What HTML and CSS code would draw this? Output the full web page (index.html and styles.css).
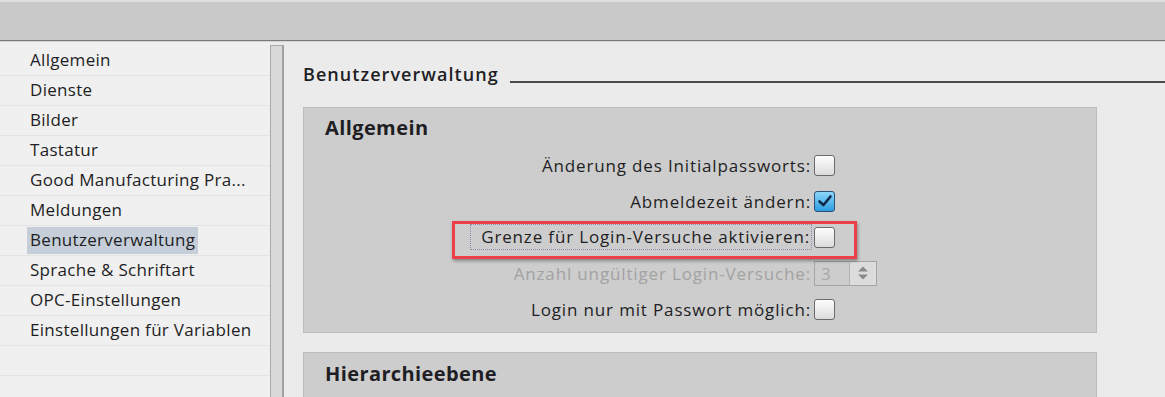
FILE: index.html
```html
<!DOCTYPE html>
<html>
<head>
    <link rel="stylesheet" href="styles.css">
</head>
<body>
    <div class="topbar"></div>

    <div class="main">
        <div class="nav">
            <ul class="nav-list">
                <li><span>Allgemein</span></li>
                <li><span>Dienste</span></li>
                <li><span>Bilder</span></li>
                <li><span>Tastatur</span></li>
                <li><span>Good Manufacturing Pra...</span></li>
                <li><span>Meldungen</span></li>
                <li class="selected"><span>Benutzerverwaltung</span></li>
                <li><span>Sprache &amp; Schriftart</span></li>
                <li><span>OPC-Einstellungen</span></li>
                <li><span>Einstellungen für Variablen</span></li>
                <li><span></span></li>
            </ul>
        </div>
        <div class="scrollbar"><div class="thumb"></div></div>

        <div class="content">
            <div class="section-title">
                <span>Benutzerverwaltung</span>
                <div class="title-line"></div>
            </div>

            <div class="group">
                <div class="group-title">Allgemein</div>
                <div class="row">
                    <div class="label">Änderung des Initialpassworts:</div>
                    <div class="check"></div>
                </div>
                <div class="row">
                    <div class="label">Abmeldezeit ändern:</div>
                    <div class="check checked">
                        <svg width="16" height="14" viewBox="0 0 16 14"><path d="M2.5 7.5 L6.5 11 L13.5 2.5" fill="none" stroke="#10284a" stroke-width="2.6" stroke-linejoin="round" stroke-linecap="round"/></svg>
                    </div>
                </div>
                <div class="row">
                    <div class="label"><span class="focus">Grenze für Login-Versuche aktivieren:</span></div>
                    <div class="check"></div>
                </div>
                <div class="row">
                    <div class="label disabled">Anzahl ungültiger Login-Versuche:</div>
                    <div class="spin">
                        <div class="spin-value">3</div>
                        <div class="spin-btn">
                            <svg width="14" height="16" viewBox="0 0 14 16"><path d="M2 6.5 L7 1.5 L12 6.5 Z M2 9.5 L12 9.5 L7 14.5 Z" fill="#8a8a8a"/></svg>
                        </div>
                    </div>
                </div>
                <div class="row">
                    <div class="label">Login nur mit Passwort möglich:</div>
                    <div class="check"></div>
                </div>
                <div class="marker"></div>
            </div>

            <div class="group group-second">
                <div class="group-title">Hierarchieebene</div>
            </div>
        </div>
    </div>
</body>
</html>
```
FILE: styles.css
```css
body {
    margin: 0;
    font-family: "Open Sans", "DejaVu Sans", sans-serif;
    font-size: 17px;
    letter-spacing: 0.85px;
    color: #1e1e24;
    background: #ebebeb;
    overflow: hidden;
    height: 100vh;
}

.topbar {
    height: 38px;
    background: #c9c9c9;
    border-top: 2px solid #dedede;
    border-bottom: 1px solid #7a7a7a;
}

.main {
    display: flex;
    height: calc(100vh - 42px);
    overflow: hidden;
    border-top: 1px solid #d4d4d4;
}

/* left navigation */
.nav {
    width: 270px;
    background: #f0f0f0;
    padding-top: 4px;
    letter-spacing: 0.3px;
}

.nav-list {
    margin: 0;
    padding: 0;
    list-style: none;
}

.nav-list li {
    height: 29px;
    border-bottom: 1px solid #e4e4e4;
    display: flex;
    align-items: center;
    padding-left: 27px;
}

.nav-list li span {
    padding: 1px 3px 3px 3px;
    line-height: 23px;
}

.nav-list li.selected span {
    background: #c6cfd9;
}

.scrollbar {
    width: 11px;
    background: #dadada;
    border-left: 1px solid #a9a9a9;
    border-right: 2px solid #a0a0a0;
    margin-top: 3px;
}

.scrollbar .thumb {
    height: 100%;
    border-top: 1px solid #a9a9a9;
}

/* right content */
.content {
    flex: 1;
    padding: 18px 68px 0 19px;
}

.section-title {
    display: flex;
    align-items: flex-end;
    font-size: 18px;
    font-weight: 600;
    letter-spacing: 1.05px;
    height: 26px;
    margin-right: -68px;
}

.title-line {
    flex: 1;
    border-bottom: 2px solid #4a4a4a;
    margin-left: 11px;
    margin-bottom: 3px;
}

.group {
    margin-top: 21px;
    background: #cdcdcd;
    border: 1px solid #bcbcbc;
    padding: 6px 0 5px 0;
    position: relative;
}

.group-title {
    font-size: 20px;
    font-weight: 700;
    letter-spacing: 0.4px;
    padding-left: 21px;
    line-height: 28px;
    margin-bottom: 5px;
}

.row {
    display: flex;
    align-items: center;
    height: 36px;
}

.label {
    width: 507px;
    text-align: right;
}

.label.disabled {
    color: #a2a2a2;
}

.focus {
    display: inline-block;
    outline: 1px dotted #8a8fb0;
    line-height: 22px;
    padding: 1px 1px 1px 10px;
}

.check {
    width: 19px;
    height: 19px;
    margin-left: 3px;
    border: 1px solid #6a6a6a;
    border-radius: 3px;
    background: linear-gradient(#fdfdfd, #dcdcdc);
    display: flex;
    align-items: center;
    justify-content: center;
}

.check.checked {
    border-color: #2e4f76;
    background: linear-gradient(#8ad6f7, #2d9ee0);
}

.spin {
    display: flex;
    margin-left: 3px;
    height: 23px;
    border: 1px solid #a5a5a5;
}

.spin-value {
    width: 28px;
    padding-left: 6px;
    color: #a8a8a8;
    font-size: 17px;
    line-height: 23px;
    border-right: 1px solid #b5b5b5;
}

.spin-btn {
    width: 26px;
    background: #dcdcdc;
    display: flex;
    align-items: center;
    justify-content: center;
}

/* annotation box */
.marker {
    position: absolute;
    left: 148px;
    top: 113px;
    width: 399px;
    height: 32px;
    border: 3px solid #ec3f48;
    box-shadow: 1px 2px 3px rgba(0, 0, 0, 0.35);
}

.group-second {
    margin-top: 19px;
    height: 60px;
    padding-top: 7px;
}
```
